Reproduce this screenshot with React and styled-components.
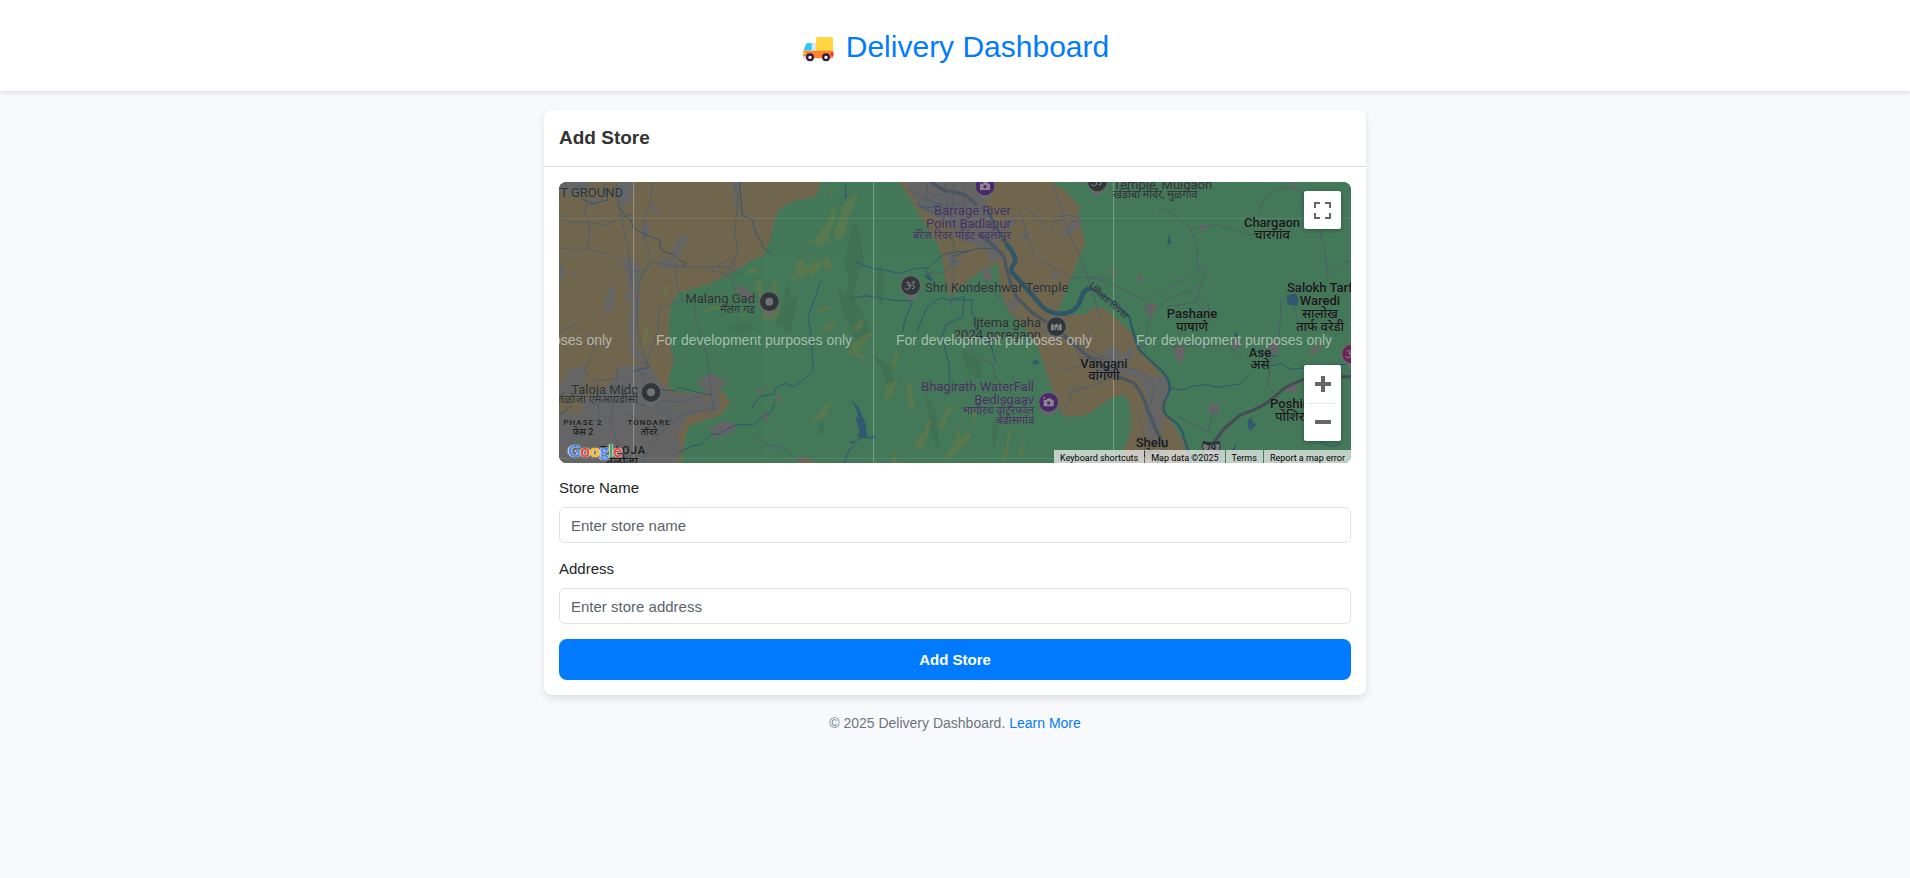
import React from "react";
import styled, { createGlobalStyle, css } from "styled-components";

const GlobalStyle = createGlobalStyle`
  *, *::before, *::after { box-sizing: border-box; }
  body {
    margin: 0;
    background: #f8f9fd;
    color: #212529;
    font-family: Arial, "Liberation Sans", sans-serif;
    font-size: 15px;
    line-height: 22px;
  }
`;

const Header = styled.header`
  display: flex;
  justify-content: center;
  padding: 29px 16px 27px;
  background: #ffffff;
  box-shadow: 0 2px 4px rgba(0, 0, 0, 0.1);
`;

const Title = styled.h1`
  display: flex;
  align-items: center;
  gap: 11px;
  margin: 0;
  color: #007bff;
  font-size: 30px;
  font-weight: 400;
  line-height: 35px;
`;

const Truck = styled.svg`
  margin-top: 4px;
`;

const Main = styled.main`
  max-width: 854px;
  margin: 0 auto;
  padding: 19px 16px 0;
`;

const Card = styled.section`
  background: #ffffff;
  border-radius: 8px;
  box-shadow: 0 4px 8px rgba(0, 0, 0, 0.1);
`;

const CardHeader = styled.div`
  padding: 16px 15px 17px;
  border-bottom: 1px solid #dddddd;
`;

const CardTitle = styled.h2`
  margin: 0;
  color: #333333;
  font-size: 19px;
  font-weight: 700;
  line-height: 23px;
`;

const CardBody = styled.form`
  display: flex;
  flex-direction: column;
  gap: 15px;
  padding: 15px;
`;

const Field = styled.div`
  display: flex;
  flex-direction: column;
  gap: 8px;
`;

const Label = styled.label`
  line-height: 22px;
`;

const Input = styled.input`
  height: 36px;
  padding: 0 11px;
  border: 1px solid #dee2e6;
  border-radius: 6px;
  background: #ffffff;
  color: #212529;
  font: inherit;
  &::placeholder { color: #5c6268; opacity: 1; }
`;

const SubmitButton = styled.button`
  height: 41px;
  border: 0;
  border-radius: 8px;
  background: #007bff;
  color: #ffffff;
  font: inherit;
  font-weight: 700;
  cursor: pointer;
`;

const Footer = styled.footer`
  padding: 17px 0;
  color: #6c757d;
  font-size: 14px;
  text-align: center;
`;

const FooterLink = styled.a`
  color: #007bff;
  text-decoration: none;
`;

const MapFrame = styled.div`
  position: relative;
  height: 281px;
  margin-bottom: -1px;
  overflow: hidden;
  border-radius: 8px;
  background: #437858;
  font-family: Roboto, "Noto Sans", "Noto Sans Devanagari", sans-serif;
`;

const MapCanvas = styled.div`
  position: absolute;
  inset: 0 auto auto 0;
  width: 792px;
  height: 281px;
`;

const Terrain = styled.svg`
  display: block;
  width: 100%;
  height: 100%;
`;

const tones = {
  place: "#2b3235",
  town: "#16191a",
  sight: "#433162",
};

const shifts = { left: "0", center: "-50%", right: "-100%" };

const Place = styled.span`
  position: absolute;
  left: ${(p) => p.$x}px;
  top: ${(p) => p.$y - 7}px;
  transform: translateX(${(p) => shifts[p.$align]}) rotate(${(p) => p.$turn || 0}deg);
  color: ${(p) => tones[p.$tone]};
  font-size: ${(p) => p.$size}px;
  font-weight: ${(p) => (p.$tone === "town" ? 500 : 400)};
  line-height: 14px;
  white-space: nowrap;
  text-shadow: 0 0 2px rgba(120, 120, 120, 0.6);
  ${(p) => p.$spaced && css`letter-spacing: 1px;`}
`;

const Watermark = styled.span`
  position: absolute;
  left: ${(p) => p.$x}px;
  top: 150px;
  color: rgba(255, 255, 255, 0.52);
  font-family: Arial, "Liberation Sans", sans-serif;
  font-size: 14px;
  line-height: 16px;
  white-space: nowrap;
`;

const GoogleMark = styled.a`
  position: absolute;
  left: 9px;
  bottom: 1px;
  font-family: Lato, sans-serif;
  font-size: 17px;
  font-weight: 700;
  line-height: 22px;
  text-decoration: none;
  text-shadow: 0 0 1px #ffffff, 1px 0 1px #cccccc, -1px 0 1px #cccccc;
`;

const Letter = styled.span`
  color: ${(p) => p.$color};
`;

const MapControls = styled.div`
  position: absolute;
  right: 10px;
  ${(p) => (p.$bottom ? "bottom: 22px;" : "top: 9px;")}
  display: flex;
  flex-direction: column;
  width: 37px;
  border-radius: 2px;
  background: #ffffff;
  box-shadow: 0 1px 4px rgba(0, 0, 0, 0.3);
`;

const MapButton = styled.button`
  display: flex;
  align-items: center;
  justify-content: center;
  height: 38px;
  padding: 0;
  border: 0;
  background: none;
  color: #666666;
  cursor: pointer;
`;

const Divider = styled.div`
  height: 1px;
  margin: 0 4px -1px;
  background: #e6e6e6;
`;

const Attribution = styled.div`
  position: absolute;
  right: 0;
  bottom: 0;
  display: flex;
  gap: 1px;
`;

const attributionItem = css`
  height: 13px;
  padding: 2px 6px 0;
  border: 0;
  background: rgba(245, 245, 245, 0.7);
  color: #000000;
  font-family: Roboto, sans-serif;
  font-size: 9px;
  line-height: 12px;
  text-decoration: none;
  white-space: nowrap;
`;

const AttributionButton = styled.button`${attributionItem}`;
const AttributionText = styled.span`${attributionItem}`;
const AttributionLink = styled.a`${attributionItem}`;

const places = [
  ["ET GROUND", 64, 11, "right", 13, "place"],
  ["Malang Gad", 196, 117, "right", 13, "place"],
  ["मलंग गड", 196, 128, "right", 11, "place"],
  ["Taloja Midc", 79, 208, "right", 13, "place"],
  ["तळोजा एमआयडीसी", 79, 218, "right", 11, "place"],
  ["PHASE 2", 24, 241, "center", 8, "town", true],
  ["फेस 2", 24, 250, "center", 9, "town"],
  ["TONDARE", 90, 241, "center", 8, "town", true],
  ["तोंदरे", 90, 250, "center", 9, "town"],
  ["TALOJA", 64, 269, "center", 11, "town", true],
  ["तळोजा", 63, 280, "center", 12, "town"],
  ["Barrage River", 452, 29, "right", 13, "sight"],
  ["Point Badlapur", 452, 42, "right", 13, "sight"],
  ["बॅरेज रिवर पॉइंट बदलापुर", 452, 54, "right", 11, "sight"],
  ["Shri Kondeshwar Temple", 366, 106, "left", 13, "place"],
  ["Temple, Mulgaon", 554, 3, "left", 13, "place"],
  ["खंडोबा मंदिर, मुळगाव", 554, 13, "left", 11, "place"],
  ["Ijtema gaha", 482, 141, "right", 13, "place"],
  ["2024 goregaon", 482, 153, "right", 13, "place"],
  ["Vangani", 545, 182, "center", 13, "town"],
  ["वांगणी", 545, 194, "center", 13, "town"],
  ["Bhagirath WaterFall", 475, 205, "right", 13, "sight"],
  ["Bedisgaav", 475, 218, "right", 13, "sight"],
  ["भागीरथ वॉटरफॉल", 475, 229, "right", 11, "sight"],
  ["बेडीसगांव", 475, 239, "right", 11, "sight"],
  ["Shelu", 593, 261, "center", 13, "town"],
  ["शेलू", 593, 273, "center", 13, "town"],
  ["Chargaon", 713, 41, "center", 13, "town"],
  ["चारगांव", 713, 53, "center", 13, "town"],
  ["Salokh Tarf", 728, 106, "left", 13, "town"],
  ["Waredi", 761, 119, "center", 13, "town"],
  ["सालोख", 761, 132, "center", 13, "town"],
  ["तार्फ वरेडी", 761, 145, "center", 13, "town"],
  ["Pashane", 633, 132, "center", 13, "town"],
  ["पाषाणे", 633, 145, "center", 13, "town"],
  ["Ase", 701, 171, "center", 13, "town"],
  ["असे", 701, 183, "center", 13, "town"],
  ["Poshir", 711, 222, "left", 13, "town"],
  ["पोशिर", 716, 235, "left", 13, "town"],
];

const googleLetters = [
  ["G", "#4285f4"],
  ["o", "#ea4335"],
  ["o", "#fbbc04"],
  ["g", "#4285f4"],
  ["l", "#34a853"],
  ["e", "#ea4335"],
];

const urban = [
  "M24 6H120L100 35 60 50 24 30Z",
  "M200 6H250L240 60 215 85 195 50Z",
  "M300 75l15 3 12 18-25 6z",
  "M545 6h25l-6 45-8 40-8-30z",
  "M368 202l16-30 24-8 5 18-20 22-4 22-25 8z",
  "M320 250l20-18 35 8 10 22-52 4z",
  "M166 360l14-50 12 15-5 55-22 25-5-30z",
  "M215 235l35 5 20 30-12 60 10 40-15 60 5 70 28 48-22 10-25-50-8-75 10-65-22-12 16-30z",
  "M24 250l22 15-8 25-14 8z",
  "M50 570l55-10-5 55-55 30-10-35z",
  "M115 60l20-8 8 18-22 8z",
  "M270 155l18-30 10 20-12 30z",
  "M24 605L95 640 110 660 180 610 205 560 250 552 300 565 325 605 355 638 445 645 505 690 470 695 400 715 395 750 375 760 390 800 375 849H24V700L95 700 90 650 24 640Z",
  "M443 598l40-20 27 22 22-6-18 30-15 5 10 45-28 10-10-50-28-16z",
  "M480 740l40-18 36 12-10 22-60 22z",
  "M555 318l30 5 20 20 2 20-22-4-28-26z",
  "M1065 6L1085 50 1110 85 1150 110 1200 150 1230 180 1285 200 1345 225 1340 170 1310 90 1290 40 1280 6Z",
  "M1190 228l18-8 8 20 20-4-10 22-22 2-12-12z",
  "M1308 225l20-18 38 16-18 12-30 14z",
  "M1330 155l26-18 8-22 35-8-4 20-28 26-22 18-10 20z",
  "M1295 260l18-4 8 24 4 16-26 10z",
  "M1370 365l28-12 10 20-22 16-16-5z",
  "M1415 172l18-12 4 10-14 12zM1532 160l22-22 32-22 10 4-22 30-30 22z",
  "M1498 290l14-22 12 14-8 20z",
  "M1640 570l25-65 25-10 20 28 40-20-5 35-30 17 70 30 60 10 15 40-25 55-40-30-30-60-70-25-65 30z",
  "M1780 655l40 15 20 50-15 70-25 10-15-60z",
  "M1782 375l35-5-12 44-14-8z",
  "M1944 140l22-10 0 20-18 4z",
  "M1865 505l38-15-4 56-22-5z",
  "M2045 480l25 6-6 22-20-8z",
  "M2270 515l45-32-5 18-28 25z",
  "M2155 490l24-12 2 40-24 10z",
  "M1968 680l30-12 10 30-30 4z",
  "M2195 620l45-15-4 36-28-8z",
  "M2220 12l15-4-4 20z",
];

const hills = [
  "M763 188l30-12 20-28 22-34 8-28 14-6-8 50-18 34 8 18-22 8-14 14-10-12z",
  "M865 118l12-40 25-28 18-12-14 52-16 30-8 44-22 18-15-16z",
  "M720 300l12-22 4-34 24-8 6 30 20-20 24-4-2 24-26 20-20-4-6 14-20-4-12 10z",
  "M812 238l22-4 12 30-24 10z",
  "M835 30l14-10-6 35z",
  "M610 272l8-10 4 18z",
  "M585 270l20-8 14 2-8 14-24 4z",
  "M610 305l20-5 8 45-14 10zM662 300l16 8 4 60-18-20zM630 400l50-12 6 20-30 15-22-8z",
  "M455 390l30-12 45-6-22 14-30 4-20 12zM560 400l24 6-10 6z",
  "M796 390l34-14 14 4-26 16-18 2zM808 445l44-25 8 4-22 24-20 8z",
  "M890 520l25-40 40-24 10 8-25 28-16 28 28 8-20 8z",
  "M900 450l20-20 14-14 4 18-14 20z",
  "M1000 650l6-38 34-12-12 42-28 28z",
  "M1020 555l14-45 9 5-12 58z",
  "M775 725l26-24 20-26 24-16-16 40-18 16-18 8z",
  "M1068 600l14 15 2 30 14 30-22 14-6-24-4-30z",
  "M1090 805l10-30 20-18 12-40 10 4-12 52-16 30-18 10z",
  "M1165 730l20-50 28-2-22 32-10 30-14 16z",
  "M1180 830l30-40 40-35 12 10-22 35-30 22-14 20z",
  "M1025 830l10-24 2 43h-16z",
  "M1205 800l22-70-2 50 12-12-10 42-14 10z",
  "M1262 700l10-26 4 30-10 36z",
  "M1348 830l18-30 6-60 8 20-10 60-10 29z",
  "M1400 830l14-40 10-6-8 40z",
  "M325 365l12-32 16-18-2 20z",
  "M275 500l4-55 14 8-10 50z",
];

const ridges = [
  "M900 140l16-12 14 52 10 70-22 40-10 110-20-30 2-90-10-30z",
  "M670 440l20-50 20-90 10 60 20-14-20 104-20 6-8-24z",
  "M860 330l50 30 35 60 20 50-40 30-30-60-20-40z",
  "M960 520l60 40 20 80-30-20-20-55z",
  "M1125 640l30 60 10 110-30-50z",
  "M1230 500l60 50 0 50-40-20z",
  "M530 440l60-15 20 20-50 15z",
  "M800 740l22-20-6 40-14 4z",
  "M990 250l10 50-8 80-20-60z",
  "M1320 760l14-50 10 40-14 60z",
];

const roads = [
  "M24 210l20-5 30 8 30-8 70 18 60 48 40 6 30-30 85 15 80-2 60 2 45 20",
  "M24 110l40 20 45-4 50 10 60-25 20-10 20 20",
  "M80 6l10 30 20 25-10 35 16 40-6 70",
  "M196 6l10 90 24 100 14 120",
  "M305 6l-6 60-24 60 8 60 18 50-32 60-12 60 4 110 30 95",
  "M550 6l12 50-10 90 6 60-8 50-20 25",
  "M375 265l2 50 18 45-70 22-4 70-35 95",
  "M430 375l8 55 28 90 10 80 12 90-20 20",
  "M480 268l55-30 12 6-20 35-45-5M515 280l30 22 10 30",
  "M24 455l50-18 40 25 16 50-30 60 30 30 70-5 26-10",
  "M70 270l4 14M130 595l-2 50 20 50-10 40",
  "M265 570l40 90 65 70-40 25-60 94M200 565l-20 160 40 124",
  "M300 660l90 5 90-25M330 740l80-40 90-15M225 700l60 30 80-10M240 600l-30 50 70 30",
  "M600 765l40 25 70 20 40 39",
  "M1070 30l60 25 50-15 60 45M1130 6l-8 80 60 24M1180 6l10 80-40 30M1210 6l-12 130M1240 6l-6 180",
  "M1100 50l90 30 80-20M1100 80l110 30 70 30",
  "M1205 160l5 60-2 100-10 60M1212 240l25 5M1120 290q20-20 46-12t40-40",
  "M1415 80l35 25 50 40 5-20 75-15M1408 95l24 80 20 60 45 20 60 40 80-5 40 10",
  "M1508 115l50-10 28 10-35 18M1413 182l20-20-30 12",
  "M1508 20l20 60 20 70 30 60 30 70 20 70 20 70-35 40-30 70 80 10",
  "M1525 575l60-15 30-30 40 5",
  "M1600 620l-40 10-5 40-30 30M1555 640l90-30 50-20",
  "M1300 300l80 100 90 50 80 30 160 75",
  "M1690 560l80 10 40 40-10 60-40 40 20 60",
  "M1610 290l80 25 80 40 32 25",
  "M1820 85l45 15 50 40 25 60-3 60 27 15-30 90 35 40M1925 145l80-10 50 15 40 15 30-5",
  "M2122 100l20-50 60-30 50 10 10 60 40 50 18 60 10 90 50-45h38",
  "M1810 350l40-30 55-20 50-40M1820 385l40-35 60-15 30-20M1850 380l70-10 30-25 20 20 10 60",
  "M2185 470l5-110 15-5M2230 385l20 70",
  "M1805 395l-15 40-5 60-18 10M1805 395l-25-20M1865 500l100-2 60-4 50 40",
  "M1880 710l22 10 70 35 15-70 20 30M2160 520l-10 100 20 20",
  "M1250 460l15 60 60 30 10 50",
];

const streams = [
  "M200 75l28 40 12 5 6 22 30 18 28 12 22 8 4 32 38 12 20 18 18 8-16 12",
  "M566 6l4 60 4 40 28 12 14 45 16 22 2 15 30 25",
  "M160 15l10 45-50 12-30-18M245 575l30-10 20-2-10-18",
  "M885 6l-2 50 5-15",
  "M808 305l-15 45-22 60 10 60 6 100-26 26-32 24-25-10-30 15-4 18-40 5-18 20-12 20",
  "M330 630l42 2 12-10 60 16 35 8M380 820l42-22 28-4 28-30 24-2 30-16 25-12 50 0 20-18 34-20 10-30",
  "M915 247l40 15 50 10 40 8 50-15 38-2 20-20 20-18 40-10h40",
  "M900 355l45-8 90 15 50 0M1085 362l-25 65-5 30M1098 458l12-35 18-40 40-30 30 8 40-12",
  "M1122 265l22 35M1240 350l-5 60-50 25-12 35 22 85 0 50",
  "M880 849l15-40 18-18-16-8 2 6 42-18",
  "M1200 230l80-25 60 0M1095 70l30 15 40-10",
  "M1860 625l38 5 30-12 40-4 28 8 70-10 30-30M2150 560l40-10 30 18 90-10 90-6",
  "M2100 510l80 20M2300 782l40 18 30-8",
  "M1205 360l60 0-5 35 20 30-10 40 50 30 15 55",
  "M24 650l20-15M24 705l40-28",
];

const pins = [
  [655, 365, "#30363a", "ring"],
  [300, 637, "#30363a", "ring"],
  [1079, 317, "#30363a", "om"],
  [1302, 18, "#4a2869", "camera"],
  [1639, 6, "#30363a", "om"],
  [1516, 440, "#30363a", "hall"],
  [1493, 667, "#4a2869", "camera"],
  [2402, 522, "#6d2458", "om"],
];

const glyphs = {
  ring: <circle r="12" fill="#737373" />,
  om: (
    <g fill="none" stroke="#8b8f91" strokeWidth="3">
      <path d="M-14-8q8-6 11 0 0 6-6 6 9 1 7 9-6 9-16 1M-2 0q8-6 12 0 4 10-6 9M3-10q5 5 11-1" />
      <circle cx="8" cy="-14" r="1" />
    </g>
  ),
  hall: <path d="M-16 11V-4l4-6 4 6v15zM8 11V-4l4-6 4 6v15zM-6 11V-4q6-10 12 0v15H2V2h-4v9z" fill="#858a8c" />,
  camera: (
    <g>
      <path d="M-15-7h8l4-5h9l4 5h5v19h-30z" fill="#8c8394" />
      <circle cy="2" r="5" fill="#4a2869" />
      <path d="M-17-13h8M-13-17v8" stroke="#8c8394" strokeWidth="2" />
    </g>
  ),
};

function TruckIcon() {
  return (
    <Truck width="34" height="27" viewBox="63 105 102 81" aria-hidden="true">
      <path d="M84 128h26v26H70v-4l6-16q2-6 8-6z" fill="#e1e3ea" />
      <path d="M83 130h12v18q0 3-3 3H72l5-16q2-5 6-5z" fill="#26c9fc" />
      <rect x="108" y="111" width="51" height="45" rx="6" fill="#ffd640" />
      <path d="M69 152h91v18q0 5-5 5H74q-5 0-5-5z" fill="#ff822d" />
      <path d="M69 155h7v8h-7z" fill="#ffd640" />
      <path d="M153 158h7v9h-7z" fill="#f01b45" />
      <path d="M69 168h8v7h-5q-3 0-3-3z" fill="#d3d3dc" />
      <circle cx="90" cy="172" r="12" fill="#321b41" />
      <circle cx="90" cy="172" r="5" fill="#ffffff" />
      <circle cx="138" cy="172" r="12" fill="#321b41" />
      <circle cx="138" cy="172" r="5" fill="#ffffff" />
    </Truck>
  );
}

function MapTerrain() {
  return (
    <Terrain viewBox="24 6 2376 843" aria-hidden="true">
      <rect x="24" y="6" width="2376" height="843" fill="#437858" />
      <g fill="#406b50" opacity="0.5">{ridges.map((d) => <path key={d} d={d} />)}</g>
      <g fill="#70664e">
        <path d="M24 6H810L800 40 Q790 55 770 55L720 65 Q685 80 672 115L665 150 655 190 640 225 605 240 540 280 480 310 400 335 Q375 335 365 365L355 400V480L368 545 355 590 352 620 380 635 440 640 515 632 538 668 515 700 480 715 420 735 405 760 398 800 390 849H24Z" />
        <path d="M740 849l2-14h38l8 14z" />
        <path d="M1045 6L1080 60 1120 130 1160 190 1175 240 1182 300 1197 348 1230 320 1275 285 1310 262 1340 248 1345 300 1352 340 1375 400 1420 440 1460 500 1480 560 1500 620 1520 680 Q1530 712 1560 710L1600 708 1660 670 1690 650 1715 645 1735 665 1740 700 1738 760 1720 800 1710 849H1915L1900 790 1870 740 1840 690 1855 650 1850 610 1800 545 1760 500 1745 460 1700 420 1660 385 1630 380 1600 405 1550 400 1522 390 1545 330 1570 270 1602 190 1585 110V75L1540 30 1500 6Z" />
      </g>
      <g fill="#656565">{urban.map((d) => <path key={d} d={d} />)}</g>
      <path d="M400 715l60-22 45 0 10 10-35 12-60 20-18 20z" fill="#70664e" />
      <g fill="#667a49" opacity="0.6">{hills.map((d) => <path key={d} d={d} />)}</g>
      <g fill="#6b6068">
        <path d="M615 632l30-10 2 6-28 10zM676 655l14-9v18l-13-2zM640 698l10-2 5 20-12 4zM740 826l18 8 4 10-14-4zM1680 275l10-6 6 8-10 12zM1760 288l10-6 6 22-10 2z" />
      </g>
      <g fill="none" stroke="#525d68" strokeWidth="3" strokeLinejoin="round">
        {roads.map((d) => <path key={d} d={d} />)}
      </g>
      <g fill="none" stroke="#325674" strokeWidth="3" strokeLinejoin="round">
        {streams.map((d) => <path key={d} d={d} />)}
      </g>
      <g fill="none" strokeLinejoin="round" strokeLinecap="round">
        <path d="M1140 6l40 25 60 12 35 30M1285 165Q1345 205 1360 235Q1370 290 1395 350L1440 395 1520 450 1600 520 1690 585 1750 610Q1775 640 1790 690L1815 750 1840 800" stroke="#4b5661" strokeWidth="10" />
        <path d="M1368 195Q1395 225 1393 245Q1372 270 1390 285L1440 340Q1475 385 1495 395Q1530 408 1560 395Q1585 380 1590 355Q1600 325 1620 325" stroke="#2f5666" strokeWidth="14" />
        <path d="M1310 90l30 60 28 45M1620 325Q1680 355 1735 410Q1748 470 1765 510Q1800 545 1835 575Q1868 615 1850 645Q1825 690 1850 710Q1895 735 1900 780Q1918 820 1916 849" stroke="#2f5968" strokeWidth="7" />
        <path d="M1990 785Q2005 765 2018 747L2068 705Q2140 680 2165 655L2200 625Q2260 590 2300 590H2400" stroke="#454c54" strokeWidth="9" />
      </g>
      <g fill="#315870">
        <path d="M900 657l22 25 14 30 8 20 4 36 10 4 14-8-2 12-50-4 6-18-12-40 8-4-4-20z" />
        <path d="M2207 345l28-4 8 16-4 22-30-6z" />
        <path d="M2092 720l8-8 6 18 12 2-20 22-8-14zM1850 180l5-20 2 18 4 14-12 2zM2040 815l18-28-8 28zM1445 544l14-4 6 12-10-2-5 8zM1120 285l14 2 12 16-16-4zM2048 465l8-8 6 6-5 8z" />
      </g>
      <path d="M1958 785q22 8 46 0l4 14q-5 8-2 20-3 18-25 30-22-12-25-30 3-12-2-20z" fill="#70757a" stroke="#292e32" strokeWidth="3" />
      <path d="M1957 784q23 9 48 0l3 8h-54z" fill="#292e32" />
      {pins.map(([x, y, fill, glyph]) => (
        <g key={`${x}-${y}`} transform={`translate(${x} ${y})`}>
          <path d="M0 46L-24 22A32 32 0 1 1 24 22Z" fill="#67696a" />
          <circle r="28" fill={fill} />
          {glyphs[glyph]}
        </g>
      ))}
      <path d="M248 6V849M968 6V849M1688 6V849" stroke="#ffffff" strokeOpacity="0.3" strokeWidth="3" />
      <path d="M24 115H2400M24 835H2400" stroke="#ffffff" strokeOpacity="0.1" strokeWidth="3" />
    </Terrain>
  );
}

function StoreMap() {
  return (
    <MapFrame>
      <MapCanvas>
        <MapTerrain />
        {places.map(([text, x, y, align, size, tone, spaced]) => (
          <Place key={text} $x={x} $y={y} $align={align} $size={size} $tone={tone} $spaced={spaced}>
            {text}
          </Place>
        ))}
        <Place $x={550} $y={119} $align="center" $size={10} $tone="place" $turn={41}>Ulhas River</Place>
        <Place $x={652} $y={266} $align="center" $size={9} $tone="town">79</Place>
        {[-143, 97, 337, 577].map((x) => (
          <Watermark key={x} $x={x}>For development purposes only</Watermark>
        ))}
      </MapCanvas>
      <GoogleMark href="#google-maps" aria-label="Google">
        {googleLetters.map(([letter, color], i) => <Letter key={i} $color={color}>{letter}</Letter>)}
      </GoogleMark>
      <MapControls>
        <MapButton type="button" aria-label="Toggle fullscreen view">
          <svg width="17" height="17" viewBox="0 0 17 17" fill="none" stroke="currentColor" strokeWidth="2">
            <path d="M1 6V1h5M11 1h5v5M16 11v5h-5M6 16H1v-5" />
          </svg>
        </MapButton>
      </MapControls>
      <MapControls $bottom>
        <MapButton type="button" aria-label="Zoom in">
          <svg width="16" height="16" viewBox="0 0 16 16" fill="currentColor">
            <path d="M6 0h4v6h6v4h-6v6H6v-6H0V6h6z" />
          </svg>
        </MapButton>
        <Divider />
        <MapButton type="button" aria-label="Zoom out">
          <svg width="16" height="16" viewBox="0 0 16 16" fill="currentColor">
            <path d="M0 6h16v4H0z" />
          </svg>
        </MapButton>
      </MapControls>
      <Attribution>
        <AttributionButton type="button">Keyboard shortcuts</AttributionButton>
        <AttributionText>Map data ©2025</AttributionText>
        <AttributionLink href="#terms">Terms</AttributionLink>
        <AttributionLink href="#report">Report a map error</AttributionLink>
      </Attribution>
    </MapFrame>
  );
}

export default function App() {
  return (
    <>
      <GlobalStyle />
      <Header>
        <Title>
          <TruckIcon />
          Delivery Dashboard
        </Title>
      </Header>
      <Main>
        <Card>
          <CardHeader>
            <CardTitle>Add Store</CardTitle>
          </CardHeader>
          <CardBody onSubmit={(event) => event.preventDefault()}>
            <StoreMap />
            <Field>
              <Label htmlFor="store-name">Store Name</Label>
              <Input id="store-name" type="text" placeholder="Enter store name" />
            </Field>
            <Field>
              <Label htmlFor="store-address">Address</Label>
              <Input id="store-address" type="text" placeholder="Enter store address" />
            </Field>
            <SubmitButton type="submit">Add Store</SubmitButton>
          </CardBody>
        </Card>
        <Footer>
          © 2025 Delivery Dashboard. <FooterLink href="#learn-more">Learn More</FooterLink>
        </Footer>
      </Main>
    </>
  );
}
